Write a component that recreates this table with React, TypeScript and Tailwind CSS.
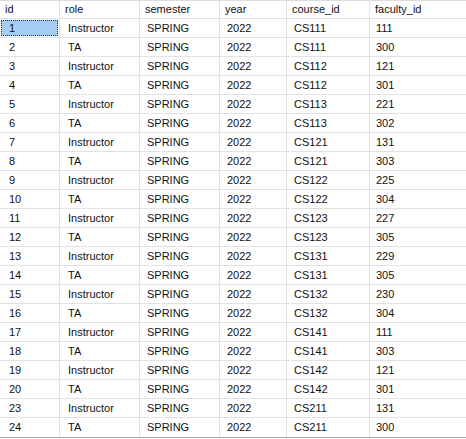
type Row = [string, string, string, string, string, string]

const headers = ['id', 'role', 'semester', 'year', 'course_id', 'faculty_id']

const rows: Row[] = [
  ['1', 'Instructor', 'SPRING', '2022', 'CS111', '111'],
  ['2', 'TA', 'SPRING', '2022', 'CS111', '300'],
  ['3', 'Instructor', 'SPRING', '2022', 'CS112', '121'],
  ['4', 'TA', 'SPRING', '2022', 'CS112', '301'],
  ['5', 'Instructor', 'SPRING', '2022', 'CS113', '221'],
  ['6', 'TA', 'SPRING', '2022', 'CS113', '302'],
  ['7', 'Instructor', 'SPRING', '2022', 'CS121', '131'],
  ['8', 'TA', 'SPRING', '2022', 'CS121', '303'],
  ['9', 'Instructor', 'SPRING', '2022', 'CS122', '225'],
  ['10', 'TA', 'SPRING', '2022', 'CS122', '304'],
  ['11', 'Instructor', 'SPRING', '2022', 'CS123', '227'],
  ['12', 'TA', 'SPRING', '2022', 'CS123', '305'],
  ['13', 'Instructor', 'SPRING', '2022', 'CS131', '229'],
  ['14', 'TA', 'SPRING', '2022', 'CS131', '305'],
  ['15', 'Instructor', 'SPRING', '2022', 'CS132', '230'],
  ['16', 'TA', 'SPRING', '2022', 'CS132', '304'],
  ['17', 'Instructor', 'SPRING', '2022', 'CS141', '111'],
  ['18', 'TA', 'SPRING', '2022', 'CS141', '303'],
  ['19', 'Instructor', 'SPRING', '2022', 'CS142', '121'],
  ['20', 'TA', 'SPRING', '2022', 'CS142', '301'],
  ['23', 'Instructor', 'SPRING', '2022', 'CS211', '131'],
  ['24', 'TA', 'SPRING', '2022', 'CS211', '300'],
]

// value indent per column (values sit a touch right of the headers)
const valuePad = ['pl-[9px]', 'pl-[8px]', 'pl-[7px]', 'pl-[7px]', 'pl-[7px]', 'pl-[6px]']

const grid = 'grid grid-cols-[60px_80px_80px_67px_83px_1fr]'

export default function App() {
  return (
    <div className="h-[439px] w-[466px] overflow-hidden bg-white font-['Liberation_Sans',Arial,sans-serif] text-[11px] leading-none text-[#111]">
      <div className={`${grid} h-[19px] border-t border-[#dcdcdc]`}>
        {headers.map((h) => (
          <div
            key={h}
            className="flex items-center border-r border-b border-[#e2e2e2] pl-[5px] last:border-r-0"
          >
            {h}
          </div>
        ))}
      </div>
      <div className="border-b border-[#a9a9a9]">
        {rows.map((row, r) => (
          <div key={row[0]} className={`${grid} h-[19px]`}>
            {row.map((val, c) => {
              const selected = r === 0 && c === 0
              return (
                <div
                  key={c}
                  className={`border-r border-b border-[#e2e2e2] last:border-r-0 ${
                    r === rows.length - 1 ? 'border-b-0' : ''
                  } ${selected ? 'p-[1px]' : ''}`}
                >
                  {selected ? (
                    <div className="flex h-full items-center border border-dotted border-[#333] bg-[#a6cdf2] pl-[7px]">
                      {val}
                    </div>
                  ) : (
                    <div className={`flex h-full items-center ${valuePad[c]}`}>{val}</div>
                  )}
                </div>
              )
            })}
          </div>
        ))}
      </div>
    </div>
  )
}
